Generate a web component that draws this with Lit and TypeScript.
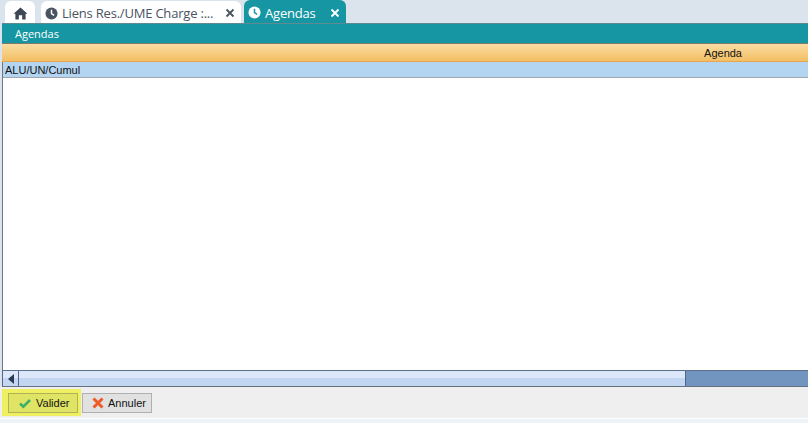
import { LitElement, html, css } from "lit";
import { customElement } from "lit/decorators.js";

const clock = html`<svg class="clock" viewBox="0 0 14 14"><circle cx="7" cy="7" r="6.5" fill="currentColor"/><path d="M7 3v4.2l2.8 1.8" fill="none" stroke="var(--hand)" stroke-width="1.6"/></svg>`;
const close = html`<svg class="x" viewBox="0 0 10 10"><path d="M1.5 1.5l7 7M8.5 1.5l-7 7" stroke="currentColor" stroke-width="1.8" fill="none"/></svg>`;

@customElement("app-root")
export class AppRoot extends LitElement {
  static styles = css`
    :host { display: block; width: 808px; height: 423px; background: #dbe4ec; overflow: hidden; }
    .tabs { height: 23px; display: flex; align-items: flex-end; padding-left: 5px; font: 13px "Open Sans", sans-serif; letter-spacing: -0.2px; }
    .tab { height: 22px; background: #fff; border-radius: 6px 6px 0 0; display: flex; align-items: center; color: #4a5361; box-sizing: border-box; padding-top: 2px; }
    .home { width: 30px; justify-content: center; margin-right: 6px; padding-top: 2px; }
    .home svg { width: 15px; height: 13px; display: block; }
    .t1 { width: 200px; padding-left: 4px; margin-right: 3px; --hand: #fff; }
    .t2 { width: 102px; padding-left: 4px; background: #1696a2; color: #fff; height: 23px; --hand: #1696a2; }
    .clock { width: 13px; height: 13px; margin-right: 4px; flex: none; }
    .label { flex: 1; white-space: nowrap; }
    .x { width: 10px; height: 10px; margin-right: 6px; flex: none; }
    .main { margin-left: 2px; height: 364px; display: flex; flex-direction: column; background: #fff; border-left: 1px solid #6d7785; box-sizing: border-box; }
    .bar { height: 21px; flex: none; background: #1696a2; color: #fff; margin-left: -1px; padding-left: 13px; border-top: 1px solid #5f8a92; border-bottom: 1px solid #7c7a68; box-sizing: border-box; display: flex; align-items: center; font: 11px "Open Sans", sans-serif; }
    .head { height: 18px; flex: none; margin-left: -1px; box-sizing: border-box; background: linear-gradient(#fadca3, #f2bf63); border-bottom: 1px solid #e9a650; display: flex; align-items: center; justify-content: flex-end; padding-right: 66px; font: 11px "Liberation Sans", sans-serif; color: #111; }
    .row { height: 16px; flex: none; background: #b3d5f2; border-bottom: 1px solid #a0a5ab; box-sizing: border-box; padding-left: 2px; display: flex; align-items: center; font: 11px "Liberation Sans", sans-serif; color: #111; }
    .body { flex: 1; background: #fff; }
    .scroll { height: 17px; flex: none; display: flex; background: #7195bf; border-bottom: 1px solid #64707e; border-top: 1px solid #5d6f8c; box-sizing: border-box; margin-left: -1px; }
    .arrow { width: 17px; flex: none; box-sizing: border-box; display: flex; align-items: center; justify-content: center; background: linear-gradient(#dce8f9 50%, #c2d6f2 50%); border-left: 1px solid #53658a; border-right: 1px solid #53658a; }
    .arrow svg { width: 6px; height: 10px; }
    .thumb { width: 667px; flex: none; box-sizing: border-box; background: linear-gradient(#dce8f9 50%, #c2d6f2 50%); border-right: 1px solid #53658a; }
    .foot { height: 31px; background: #efefef; display: flex; align-items: flex-start; padding-top: 2px; box-sizing: border-box; }
    .hl { background: #eef062; padding: 4px 3px 3px 6px; margin-left: 2px; display: flex; margin-right: 1px; height: 27px; box-sizing: border-box; }
    .btn { height: 20px; box-sizing: border-box; border: 1px solid #b0b0b0; background: #e1e1e1; display: flex; align-items: center; font: 11px "Liberation Sans", sans-serif; color: #111; }
    .hl .btn { width: 70px; background: #e0e464; border-color: #b0b255; padding-left: 10px; gap: 5px; }
    .cancel { width: 70px; padding-left: 9px; gap: 4px; margin-top: 4px; }
    .btn svg { width: 12px; height: 12px; flex: none; }
    .end { height: 5px; background: #edf2f7; border-top: 1px solid #fff; box-sizing: border-box; }
  `;

  render() {
    return html`
      <div class="tabs">
        <div class="tab home"><svg viewBox="0 0 15 14"><path d="M7.5 0.5L15 7.3h-2V13.5H9.3V9H5.7v4.5H2V7.3H0z" fill="#3c4654"/></svg></div>
        <div class="tab t1">${clock}<span class="label">Liens Res./UME Charge :...</span>${close}</div>
        <div class="tab t2">${clock}<span class="label">Agendas</span>${close}</div>
      </div>
      <div class="main">
        <div class="bar">Agendas</div>
        <div class="head">Agenda</div>
        <div class="row">ALU/UN/Cumul</div>
        <div class="body"></div>
        <div class="scroll">
          <div class="arrow"><svg viewBox="0 0 6 10"><path d="M6 0v10L0 5z" fill="#2c3a52"/></svg></div>
          <div class="thumb"></div>
        </div>
      </div>
      <div class="foot">
        <div class="hl"><div class="btn"><svg viewBox="0 0 12 12"><path d="M1 6.5l3.3 3.2L11 3" fill="none" stroke="#3fb068" stroke-width="2.6"/></svg>Valider</div></div>
        <div class="btn cancel"><svg viewBox="0 0 12 12"><path d="M1.5 1.5l9 9M10.5 1.5l-9 9" fill="none" stroke="#ee5a28" stroke-width="3"/></svg>Annuler</div>
      </div>
      <div class="end"></div>
    `;
  }
}
